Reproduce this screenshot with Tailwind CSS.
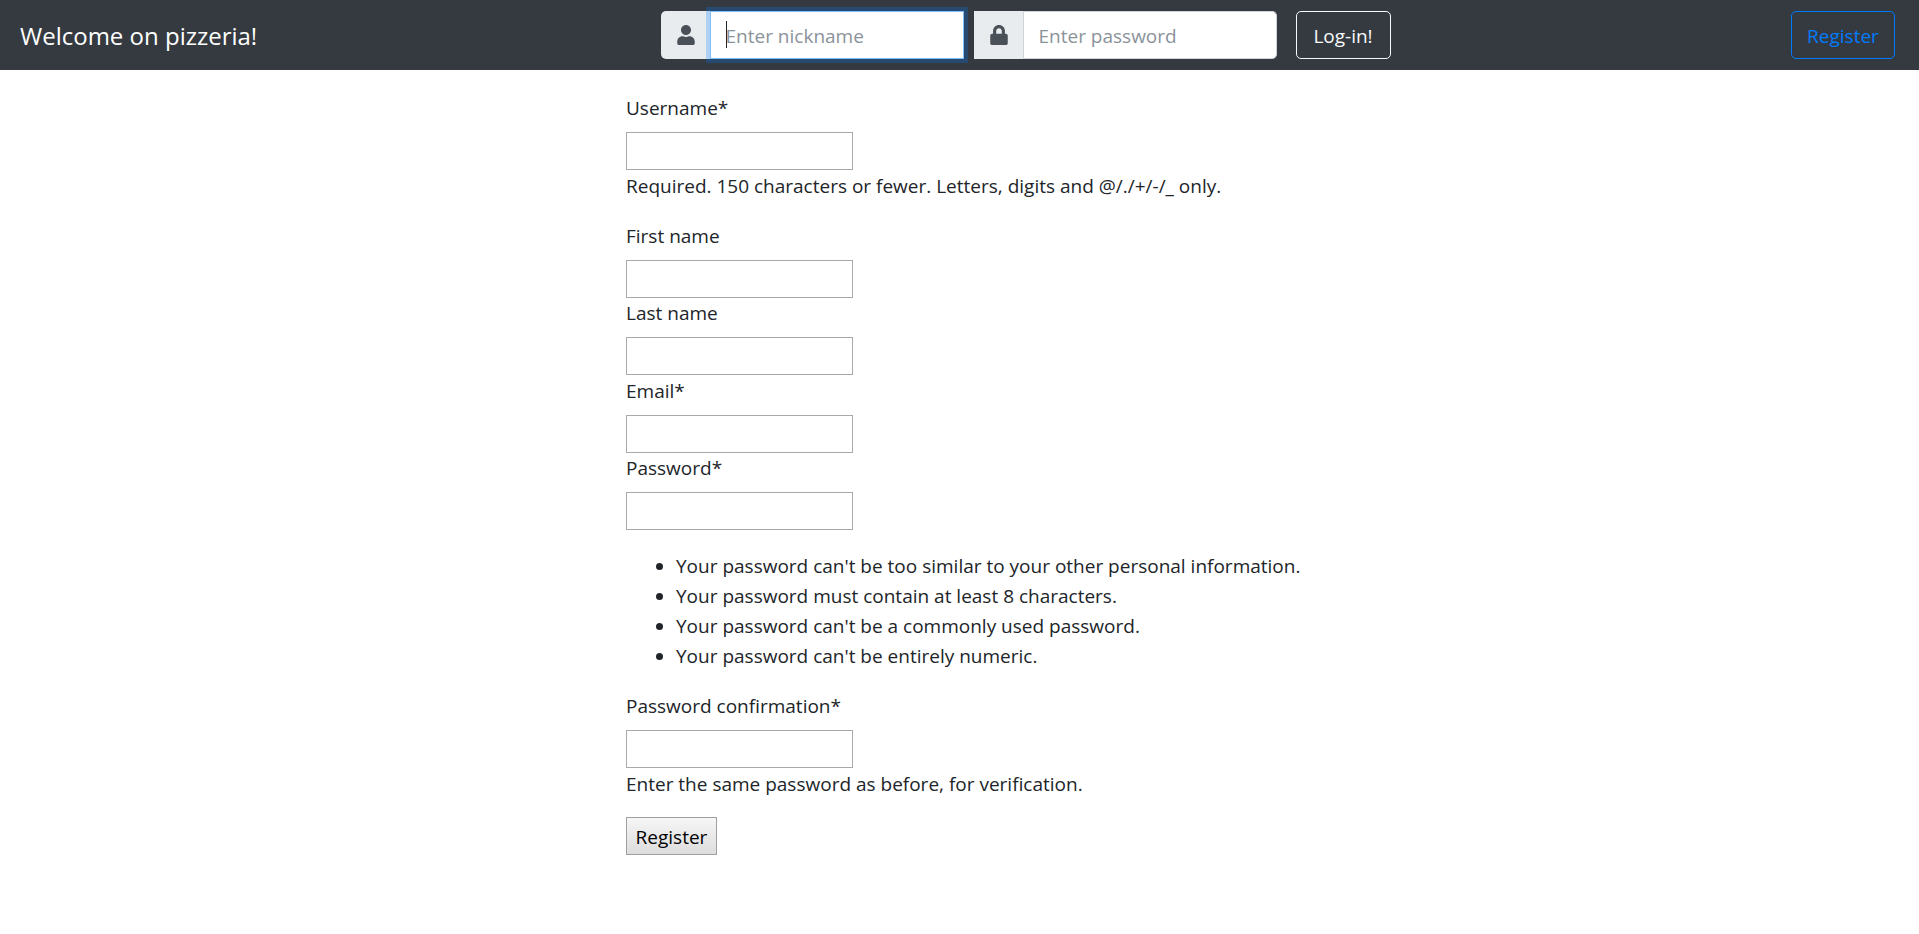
<!DOCTYPE html>
<html lang="en">
<head>
<meta charset="utf-8">
<meta name="viewport" content="width=device-width, initial-scale=1">
<title>Pizzeria</title>
<script src="https://cdn.jsdelivr.net/npm/@tailwindcss/browser@4"></script>
</head>
<body class="bg-white font-['Open_Sans','Noto_Sans',sans-serif] text-[19px] leading-[30px] text-[#212529]">
<nav class="flex min-h-[70px] items-center justify-between bg-[#343a40] pr-6 pl-5">
  <a href="#" class="w-60 pt-0.5 text-2xl whitespace-nowrap text-white">Welcome on pizzeria!</a>
  <form class="flex items-center">
    <div class="flex h-12 w-[303px]">
      <label for="nick" class="flex w-[49px] items-center justify-center rounded-l-[5px] bg-[#e9ecef] pl-px" aria-label="Nickname">
        <svg class="h-5 w-[18px] fill-[#495057]" viewBox="0 0 448 512"><path d="M224 256c70.700 0 128-57.300 128-128S294.700 0 224 0 96 57.300 96 128s57.300 128 128 128zm89.600 32h-16.700c-22.200 10.200-46.900 16-72.900 16s-50.600-5.800-72.900-16h-16.700C60.200 288 0 348.200 0 422.400V464c0 26.500 21.500 48 48 48h352c26.500 0 48-21.500 48-48v-41.600c0-74.200-60.200-134.400-134.400-134.400z"/></svg>
      </label>
      <div class="relative min-w-0 flex-1">
        <input id="nick" type="text" placeholder="Enter nickname" class="h-12 w-full border border-[#80bdff] bg-white px-[15px] pt-0.5 shadow-[0_0_0_4px_rgba(0,123,255,0.25)] outline-none placeholder:text-[#8a929a]">
        <span class="absolute top-[10px] left-4 h-[27px] w-px bg-[#212529]"></span>
      </div>
    </div>
    <div class="ml-[10px] flex h-12 w-[303px]">
      <label for="pass" class="flex w-[50px] items-center justify-center border-r border-[#ced4da] bg-[#e9ecef] pl-px" aria-label="Password">
        <svg class="h-5 w-[18px] fill-[#495057]" viewBox="0 0 448 512"><path d="M400 224h-24v-72C376 68.200 307.800 0 224 0S72 68.200 72 152v72H48c-26.500 0-48 21.500-48 48v192c0 26.500 21.500 48 48 48h352c26.500 0 48-21.500 48-48V272c0-26.500-21.500-48-48-48zm-104 0H152v-72c0-39.700 32.300-72 72-72s72 32.300 72 72v72z"/></svg>
      </label>
      <input id="pass" type="password" placeholder="Enter password" class="h-12 min-w-0 flex-1 rounded-r-[5px] border border-l-0 border-[#ced4da] bg-white px-[15px] pt-0.5 outline-none placeholder:text-[#8a929a]">
    </div>
    <button type="submit" class="ml-[19px] h-12 w-[95px] rounded-[5px] border border-[#f8f9fa] pt-0.5 text-[#f8f9fa]">Log-in!</button>
  </form>
  <a href="#" class="flex h-12 w-[104px] items-center justify-center rounded-[5px] border border-[#007bff] pt-0.5 text-[#007bff]">Register</a>
</nav>
<main class="mx-auto w-full max-w-[667px] pt-[23px]">
  <form class="flex flex-col items-start">
    <label for="username" class="mb-[9px]">Username*</label>
    <input id="username" type="text" class="h-[38px] w-[227px] border border-[#a9a9a9] px-1">
    <p class="mt-px mb-5">Required. 150 characters or fewer. Letters, digits and @/./+/-/_ only.</p>
    <label for="first" class="mb-[9px]">First name</label>
    <input id="first" type="text" class="h-[38px] w-[227px] border border-[#a9a9a9] px-1">
    <label for="last" class="mb-[9px]">Last name</label>
    <input id="last" type="text" class="h-[38px] w-[227px] border border-[#a9a9a9] px-1">
    <label for="email" class="mt-px mb-[9px]">Email*</label>
    <input id="email" type="email" class="h-[38px] w-[227px] border border-[#a9a9a9] px-1">
    <label for="password1" class="mb-[9px]">Password*</label>
    <input id="password1" type="password" class="h-[38px] w-[227px] border border-[#a9a9a9] px-1">
    <ul class="mt-[21px] mb-5 w-max list-disc pl-[50px]">
      <li>Your password can't be too similar to your other personal information.</li>
      <li>Your password must contain at least 8 characters.</li>
      <li>Your password can't be a commonly used password.</li>
      <li>Your password can't be entirely numeric.</li>
    </ul>
    <label for="password2" class="mb-[9px]">Password confirmation*</label>
    <input id="password2" type="password" class="h-[38px] w-[227px] border border-[#a9a9a9] px-1">
    <p class="mt-px mb-[18px]">Enter the same password as before, for verification.</p>
    <button type="submit" class="h-[38px] w-[91px] border border-[#a0a0a0] bg-linear-to-b from-[#f6f6f6] to-[#dddddd] pt-0.5 text-black">Register</button>
  </form>
</main>
</body>
</html>
